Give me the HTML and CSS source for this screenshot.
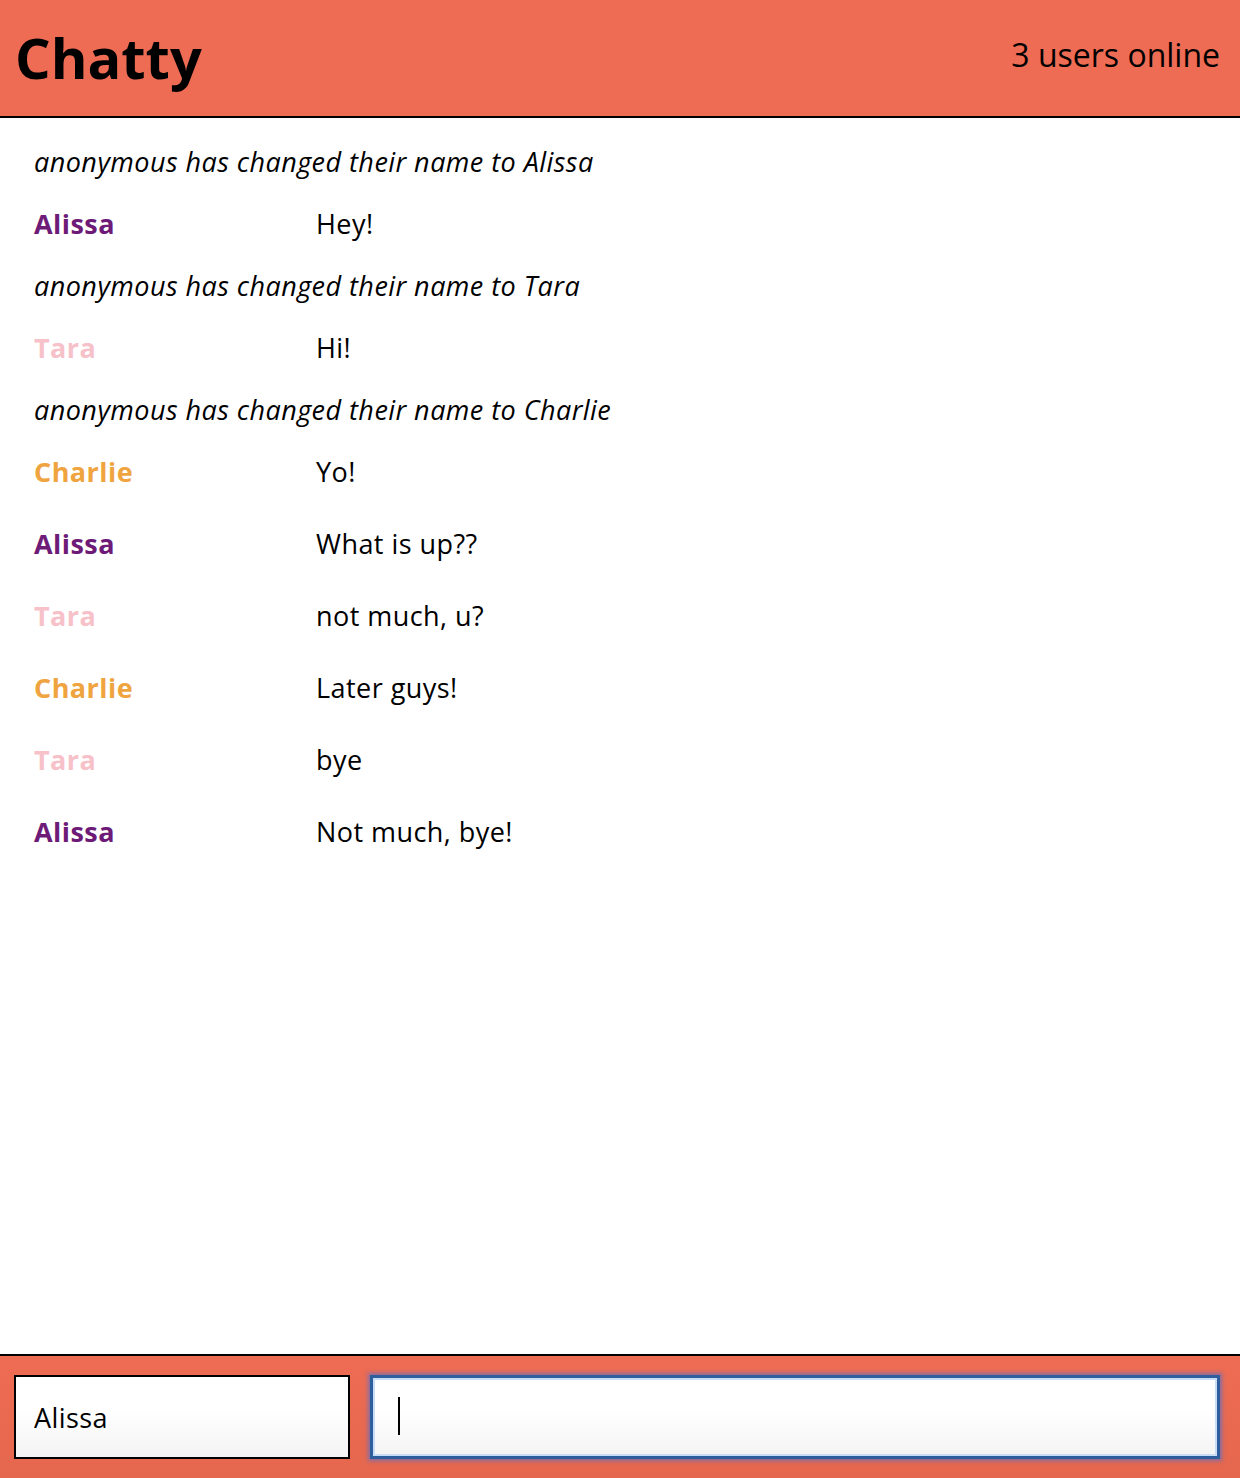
FILE: index.html
```html
<!DOCTYPE html>
<html>
<head>
<meta charset="utf-8">
<link rel="stylesheet" href="styles.css">
</head>
<body>
<div class="app">
  <header class="navbar">
    <h1 class="brand">Chatty</h1>
    <span class="online">3 users online</span>
  </header>
  <main class="messages">
    <div class="system">anonymous has changed their name to Alissa</div>
    <div class="message"><span class="user alissa">Alissa</span><span class="content">Hey!</span></div>
    <div class="system">anonymous has changed their name to Tara</div>
    <div class="message"><span class="user tara">Tara</span><span class="content">Hi!</span></div>
    <div class="system">anonymous has changed their name to Charlie</div>
    <div class="message"><span class="user charlie">Charlie</span><span class="content">Yo!</span></div>
    <div class="message"><span class="user alissa">Alissa</span><span class="content">What is up??</span></div>
    <div class="message"><span class="user tara">Tara</span><span class="content">not much, u?</span></div>
    <div class="message"><span class="user charlie">Charlie</span><span class="content">Later guys!</span></div>
    <div class="message"><span class="user tara">Tara</span><span class="content">bye</span></div>
    <div class="message"><span class="user alissa">Alissa</span><span class="content">Not much, bye!</span></div>
  </main>
  <footer class="chatbar">
    <input class="field username" type="text" value="Alissa">
    <div class="msgwrap">
      <input class="field message-input" type="text" value="">
      <span class="caret"></span>
    </div>
  </footer>
</div>
</body>
</html>
```
FILE: styles.css
```css
* { box-sizing: border-box; }
html, body { margin: 0; padding: 0; }
body {
  font-family: "Open Sans", "Noto Sans", sans-serif;
  color: #000;
  background: #fff;
}
.app {
  display: flex;
  flex-direction: column;
  height: 1478px;
}
.navbar {
  height: 118px;
  flex: none;
  background: #ef6c54;
  border-bottom: 2px solid #000;
  display: flex;
  align-items: center;
  justify-content: space-between;
  padding: 0 20px 0 15px;
}
.brand {
  margin: 0;
  font-size: 56px;
  font-weight: 700;
  line-height: 1;
  letter-spacing: 0;
  position: relative;
  top: -1px;
}
.online {
  font-size: 32px;
  line-height: 1;
  position: relative;
  top: -3px;
}
.messages {
  flex: 1;
  padding: 17px 34px 0;
  font-size: 27px;
  letter-spacing: 0.45px;
}
.system {
  height: 52px;
  display: flex;
  align-items: center;
  font-style: italic;
}
.message {
  height: 72px;
  display: flex;
  align-items: center;
}
.user {
  width: 282px;
  font-weight: 700;
  flex: none;
}
.alissa { color: #6e1b78; }
.tara { color: #f7c1ca; }
.charlie { color: #f0a440; }
.chatbar {
  height: 124px;
  flex: none;
  border-top: 2px solid #000;
  background: linear-gradient(#ee6c53, #e5674d);
  display: flex;
  align-items: center;
  padding: 0 20px 0 14px;
  gap: 20px;
}
.field {
  height: 84px;
  font-family: "Open Sans", "Noto Sans", sans-serif;
  font-size: 27px;
  letter-spacing: 0.4px;
  color: #000;
  background: linear-gradient(#ffffff 40%, #f4f4f4);
  outline: none;
}
.username {
  width: 336px;
  border: 2px solid #000;
  padding: 0 18px;
}
.msgwrap {
  position: relative;
  flex: 1;
  display: flex;
}
.message-input {
  width: 100%;
  border: 3px solid #2f5e9c;
  box-shadow: inset 0 0 0 2px #c9ddf7, 0 0 4px 2px rgba(90, 110, 200, 0.7);
  padding: 0 26px;
}
.caret {
  position: absolute;
  left: 28px;
  top: 22px;
  width: 2px;
  height: 38px;
  background: #000;
}
```
